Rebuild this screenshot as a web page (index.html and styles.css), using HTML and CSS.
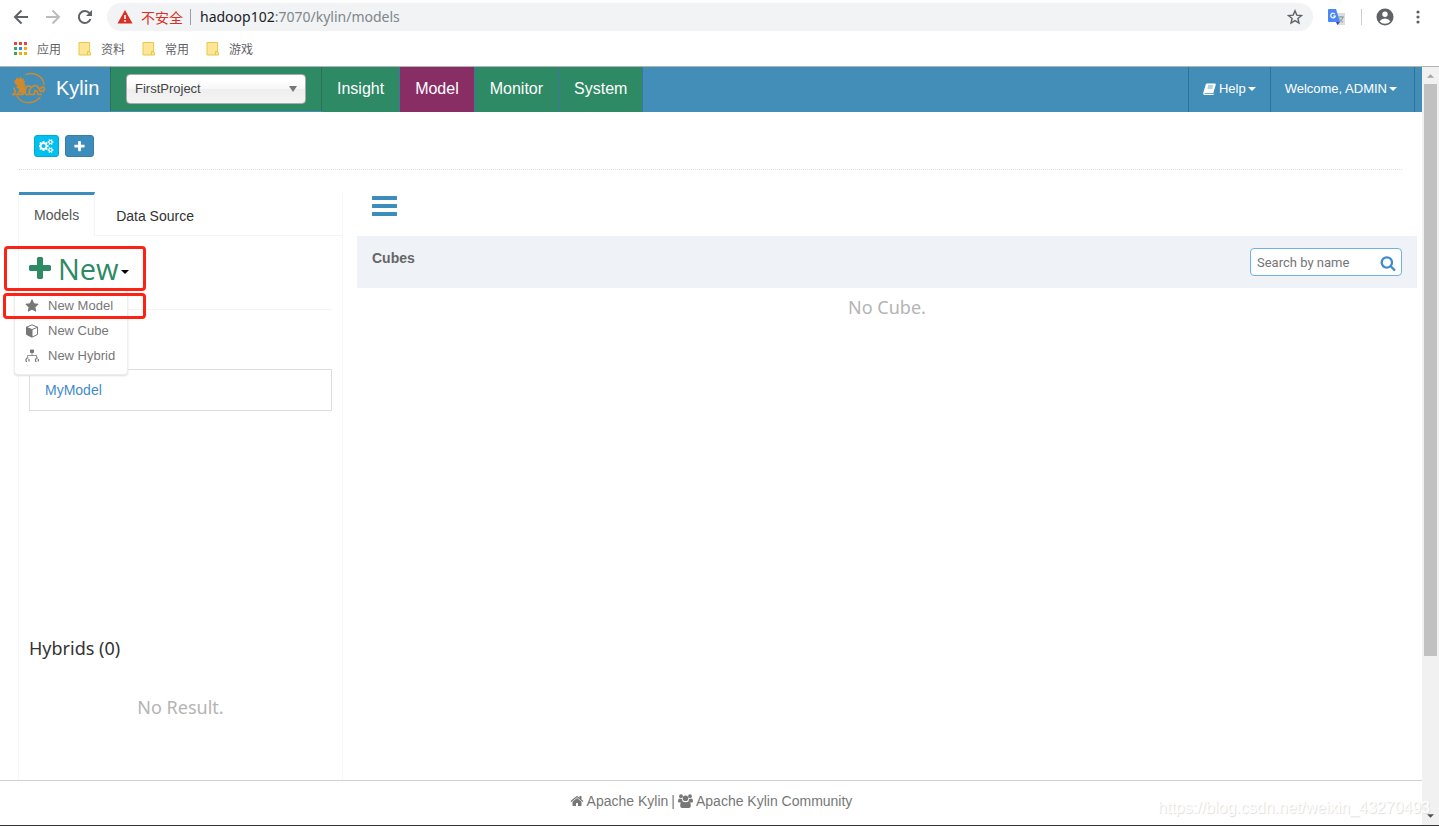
FILE: index.html
```html
<!DOCTYPE html>
<html lang="en">
<head>
<meta charset="utf-8">
<title>Kylin</title>
<link rel="stylesheet" href="styles.css">
</head>
<body>
<svg class="defs" aria-hidden="true">
  <symbol id="plus" viewBox="0 0 1792 1792"><path d="M1600 736v192q0 40-28 68t-68 28h-416v416q0 40-28 68t-68 28h-192q-40 0-68-28t-28-68v-416h-416q-40 0-68-28t-28-68v-192q0-40 28-68t68-28h416v-416q0-40 28-68t68-28h192q40 0 68 28t28 68v416h416q40 0 68 28t28 68z"/></symbol>
  <symbol id="folder" viewBox="0 0 14 16"><path d="M1 1.500h10.500v10h1v2.500h-11.500z" fill="#ffe694" stroke="#e8c74f"/><path d="M9.500 14v-3.500h2" fill="none" stroke="#e8c74f"/></symbol>
  <symbol id="caret" viewBox="0 0 8 4"><path d="M0 0h8l-4 4z"/></symbol>
</svg>

<header class="browser">
  <div class="toolbar">
    <button class="tool" aria-label="Back"><svg width="16" height="16" viewBox="0 0 16 16" fill="none" stroke="#5f6368" stroke-width="2"><path d="M15 8H2M8.500 1.500L2 8l6.500 6.500"/></svg></button>
    <button class="tool" aria-label="Forward"><svg width="16" height="16" viewBox="0 0 16 16" fill="none" stroke="#babcbe" stroke-width="2"><path d="M1 8h13M7.500 1.500L14 8l-6.500 6.500"/></svg></button>
    <button class="tool" aria-label="Reload"><svg width="16" height="16" viewBox="0 0 16 16"><path d="M13.500 10A6 6 0 1 1 12.500 4.200" fill="none" stroke="#5f6368" stroke-width="2"/><path d="M15 1v6H9z" fill="#5f6368"/></svg></button>
    <div class="address">
      <svg width="16" height="14" viewBox="0 0 16 14"><path d="M8 0l7.500 13.500H.5z" fill="#d93025"/><path d="M7.200 5h1.600v4H7.200zM7.200 10h1.600v1.700H7.200z" fill="#fff"/></svg>
      <span class="unsafe">不安全</span>
      <span class="address-rule"></span>
      <span class="url"><b>hadoop102</b>:7070/kylin/models</span>
      <button class="tool" aria-label="Bookmark"><svg width="16" height="16" viewBox="0 0 16 16"><path d="M8 1.800l1.800 4.300 4.700.4-3.600 3 1.100 4.600-4-2.500-4 2.500 1.100-4.600-3.600-3 4.700-.4z" fill="none" stroke="#5f6368" stroke-width="1.400"/></svg></button>
    </div>
    <button class="tool" aria-label="Translate"><svg width="17" height="17" viewBox="0 0 17 17"><path d="M6 4h11v12H9z" fill="#dcdcdc"/><path d="M10 8h6M13 7v1M15 8c-1 3-2.500 4-4 5M11.500 9.500c1 2 2 3 3.500 3.500" stroke="#7f9799" fill="none"/><path d="M1 0h7l4 13H1q-1 0-1-1V1q0-1 1-1z" fill="#4a89f3"/><path d="M8 13h4l-2.500 3z" fill="#3749ab"/><path d="M7 5.300A2.300 2.300 0 1 0 7.300 7H5.200" stroke="#fff" stroke-width="1.200" fill="none"/></svg></button>
    <span class="tool-rule"></span>
    <button class="tool" aria-label="Profile"><svg width="18" height="18" viewBox="0 0 18 18"><circle cx="9" cy="9" r="8.500" fill="#5f6368"/><circle cx="9" cy="6.300" r="2.700" fill="#fff"/><path d="M3.600 13.200Q5.500 10.600 9 10.600t5.400 2.600Q12.300 15.800 9 15.800t-5.400-2.600z" fill="#fff"/></svg></button>
    <button class="tool" aria-label="Browser menu"><svg width="16" height="16" viewBox="0 0 16 16" fill="#5f6368"><circle cx="8" cy="3" r="1.600"/><circle cx="8" cy="8" r="1.600"/><circle cx="8" cy="13" r="1.600"/></svg></button>
  </div>
  <nav class="bookmarks" aria-label="Bookmarks">
    <a href="#"><svg width="14" height="14" viewBox="0 0 14 14"><path d="M0 0h3v3H0zM5 0h3v3H5zM10 0h3v3h-3z" fill="#ea4335"/><path d="M0 5h3v3H0zM0 10h3v3H0z" fill="#34a853"/><path d="M5 5h3v3H5z" fill="#2d86f0"/><path d="M10 5h3v3h-3zM5 10h3v3H5zM10 10h3v3h-3z" fill="#f9ab00"/></svg>应用</a>
    <a href="#"><svg width="14" height="16"><use href="#folder"/></svg>资料</a>
    <a href="#"><svg width="14" height="16"><use href="#folder"/></svg>常用</a>
    <a href="#"><svg width="14" height="16"><use href="#folder"/></svg>游戏</a>
  </nav>
</header>

<div class="window">
  <div class="page">
    <header class="navbar">
      <a class="brand" href="#">
        <svg width="36" height="34" viewBox="0 0 36 34" fill="none" stroke="#d18a2b" stroke-linecap="round">
          <path d="M14 3.500C22 .5 31 5 32 13.500M5 25c4 8 16 9 23 1.500" stroke-width="1.300"/>
          <path d="M2 10l2-1.500L5 6l1.500 2L9 5.500 9.500 8l2.500-.5-.5 2 2 .8-1.500 2 1.500 2-1 1.700 2 2.500-1 3.200-2.500 1.500-3-1.500-1.500-4-2.500-1.500 1.500-1.500L3 12.500z" fill="#d18a2b" stroke="none"/>
          <path d="M2 17l1.500 4L1 23.500h4M7 20l-1 3.500h5l1.500-3.500M12.500 20.500l1.500 3h3" stroke-width="1.600"/>
          <path d="M14 17c0-3 4-2 5-1s3-3 6-1 1.500 5 4 5.500 4.500-2.500 3-4-4 0-2.500 1.500" stroke-width="1.700"/>
          <path d="M19 16.500l-2 4 1 3h4l1-4 2 1 1 3h3" stroke-width="1.600"/>
        </svg>
        Kylin
      </a>
      <div class="project">
        <select aria-label="Project"><option>FirstProject</option></select>
      </div>
      <nav class="menu" aria-label="Main">
        <a href="#">Insight</a><a class="current" href="#">Model</a><a href="#">Monitor</a><a href="#">System</a>
      </nav>
      <nav class="account" aria-label="Account">
        <a href="#"><svg width="13" height="12" viewBox="0 0 13 12"><path d="M4 .5h8q1 0 .8 1L10.500 9.500q-.3.800-1 .8H2q-1 0-.6.800h8.500q.8 0 1-.8l.5-1-.6 2q-.3.700-1 .7H1.500Q-.3 11.500.3 9.500L2.800 1.500Q3 .5 4 .5z" fill="#fff"/><path d="M5 3h5M4.500 5h5" stroke="#438eb9" stroke-width=".8"/></svg>Help<svg class="caret" width="8" height="4"><use href="#caret"/></svg></a>
        <a href="#">Welcome, ADMIN<svg class="caret" width="8" height="4"><use href="#caret"/></svg></a>
      </nav>
    </header>

    <div class="actions">
      <button class="info" aria-label="Manage project"><svg width="15" height="14" viewBox="0 0 1920 1792" fill="currentColor"><path d="M832 896q0-106-75-181t-181-75-181 75-75 181 75 181 181 75 181-75 75-181zm768 512q0-52-38-90t-90-38-90 38-38 90q0 53 37.500 90.500t90.500 37.500 90.500-37.500 37.500-90.500zm0-1024q0-52-38-90t-90-38-90 38-38 90q0 53 37.500 90.500t90.500 37.500 90.500-37.500 37.500-90.500zm-384 421v185q0 10-7 19.500t-16 10.500l-155 24q-11 35-32 76 34 48 90 115 7 11 7 20 0 12-7 19-23 30-82.500 89.500t-78.500 59.500q-11 0-21-7l-115-90q-37 19-77 31-11 108-23 155-7 24-30 24h-186q-11 0-20-7.500t-10-17.500l-23-153q-34-10-75-31l-118 89q-7 7-20 7-11 0-21-8-144-133-144-160 0-9 7-19 10-14 41-53t47-61q-23-44-35-82l-152-24q-10-1-17-9.500t-7-19.500v-185q0-10 7-19.500t16-10.500l155-24q11-35 32-76-34-48-90-115-7-11-7-20 0-12 7-20 22-30 82-89t79-59q11 0 21 7l115 90q34-18 77-32 11-108 23-154 7-24 30-24h186q11 0 20 7.500t10 17.500l23 153q34 10 75 31l118-89q8-7 20-7 11 0 21 8 144 133 144 160 0 8-7 19-12 16-42 54t-45 60q23 48 34 82l152 23q10 2 17 10.500t7 19.500zm640 533v140q0 16-149 31-12 27-30 52 51 113 51 138 0 4-4 7-122 71-124 71-8 0-46-47t-52-68q-20 2-30 2t-30-2q-14 21-52 68t-46 47q-2 0-124-71-4-3-4-7 0-25 51-138-18-25-30-52-149-15-149-31v-140q0-16 149-31 13-29 30-52-51-113-51-138 0-4 4-7 4-2 35-20t59-34 30-16q8 0 46 46.500t52 67.500q20-2 30-2t30 2q51-71 92-112l6-2q4 0 124 70 4 3 4 7 0 25-51 138 17 23 30 52 149 15 149 31zm0-1024v140q0 16-149 31-12 27-30 52 51 113 51 138 0 4-4 7-122 71-124 71-8 0-46-47t-52-68q-20 2-30 2t-30-2q-14 21-52 68t-46 47q-2 0-124-71-4-3-4-7 0-25 51-138-18-25-30-52-149-15-149-31v-140q0-16 149-31 13-29 30-52-51-113-51-138 0-4 4-7 4-2 35-20t59-34 30-16q8 0 46 46.500t52 67.500q20-2 30-2t30 2q51-71 92-112l6-2q4 0 124 70 4 3 4 7 0 25-51 138 17 23 30 52 149 15 149 31z"/></svg></button>
      <button class="primary" aria-label="Add project"><svg width="13" height="13" fill="currentColor"><use href="#plus"/></svg></button>
    </div>

    <main class="columns">
      <section class="side">
        <div class="tabs"><a class="tab active" href="#">Models</a><a class="tab" href="#">Data Source</a></div>
        <div class="side-body">
          <div class="new">
            <button class="new-button"><svg width="28" height="28" fill="currentColor"><use href="#plus"/></svg>New<svg class="new-caret" width="8" height="4"><use href="#caret"/></svg></button>
            <ul class="dropdown">
              <li><a href="#"><svg width="14" height="14" viewBox="0 0 1792 1792" fill="currentColor"><path d="M1728 647q0 22-26 48l-363 354 86 500q1 7 1 20 0 21-10.500 35.500t-30.500 14.500q-19 0-40-12l-449-236-449 236q-22 12-40 12-21 0-31.500-14.500t-10.500-35.500q0-6 2-20l86-500-364-354q-25-27-25-48 0-37 56-46l502-73 225-455q19-41 49-41t49 41l225 455 502 73q56 9 56 46z"/></svg>New Model</a></li>
              <li><a href="#"><svg width="14" height="14" viewBox="0 0 14 14"><path d="M7 .8l5.500 2.300v7.300L7 13.200l-5.500-2.800V3.100z" fill="#fff" stroke="#777"/><path d="M1.500 3.300L7 5.700v7.500l-5.500-2.800z" fill="#777"/><path d="M1.500 3.200L7 5.600l5.500-2.400M7 5.600v7.400" fill="none" stroke="#777"/></svg>New Cube</a></li>
              <li><a href="#"><svg width="14" height="14" viewBox="0 0 14 14" fill="none" stroke="#777"><path d="M5.500 1h3v2.500h-3z" fill="#777"/><path d="M7 4v2.500M2.500 8.500v-2h9v2" stroke-width=".8"/><path d="M1 12.500v-2l1-1.500h1.500M10.500 12.500v-2l1-1.500H13" stroke-width="1.200"/><path d="M1 12.500h1M4 10v2.500M10.500 12.500h1M13.300 10v2.500" stroke-width="1.200"/></svg>New Hybrid</a></li>
            </ul>
            <span class="mark mark-button"></span>
            <span class="mark mark-item"></span>
          </div>
          <div class="models"><a class="model" href="#">MyModel</a></div>
          <h2>Hybrids (0)</h2>
          <p class="empty">No Result.</p>
        </div>
      </section>
      <section class="content">
        <button class="toggle" aria-label="Toggle sidebar"><svg width="25" height="20" viewBox="0 0 25 20" fill="#3c8dbc"><rect width="25" height="4" rx=".5"/><rect y="8" width="25" height="4" rx=".5"/><rect y="16" width="25" height="4" rx=".5"/></svg></button>
        <div class="cubes">
          <h3>Cubes</h3>
          <label class="search">
            <input type="text" aria-label="Search by name" placeholder="Search by name">
            <svg width="16" height="16" viewBox="0 0 1792 1792" fill="#428bca"><path d="M1216 832q0-185-131.500-316.500t-316.500-131.500-316.500 131.500-131.500 316.500 131.500 316.500 316.500 131.500 316.500-131.500 131.500-316.500zm512 832q0 52-38 90t-90 38q-54 0-90-38l-343-342q-179 124-399 124-143 0-273.500-55.500t-225-150-150-225-55.500-273.500 55.500-273.500 150-225 225-150 273.500-55.500 273.500 55.500 225 150 150 225 55.500 273.500q0 220-124 399l343 343q37 37 37 90z"/></svg>
          </label>
        </div>
        <p class="empty">No Cube.</p>
      </section>
    </main>

    <footer class="footer">
      <svg width="14" height="14" viewBox="0 0 1792 1792" fill="currentColor"><path d="M1472 992v480q0 26-19 45t-45 19h-384v-384h-256v384h-384q-26 0-45-19t-19-45v-480q0-1 .5-3t.5-3l575-474 575 474q1 2 1 6zm223-69l-62 74q-8 9-21 11h-3q-13 0-21-7l-692-577-692 577q-12 8-24 7-13-2-21-11l-62-74q-8-10-7-23.500t11-21.500l719-599q32-26 76-26t76 26l244 204v-195q0-14 9-23t23-9h192q14 0 23 9t9 23v408l219 182q10 8 11 21.500t-7 23.500z"/></svg>
      <a href="#">Apache Kylin</a> |
      <svg width="15" height="14" viewBox="0 0 15 14" fill="currentColor"><circle cx="3" cy="2.200" r="1.900"/><circle cx="12" cy="2.200" r="1.900"/><circle cx="7.500" cy="4.200" r="2.800"/><path d="M0 7.500Q0 4.600 1.500 4.600L4 5Q4 6.500 5 7.500 3.500 7.500 3 8.500H1Q0 8.500 0 7.500zM15 7.500Q15 4.600 13.500 4.600L11 5Q11 6.500 10 7.500q1.500 0 2 1h2q1 0 1-1zM2.200 12Q2.200 7.600 4.500 7.600q3 1.200 6 0 2.300 0 2.300 4.400 0 2-2 2H4.200q-2 0-2-2z"/></svg>
      <a href="#">Apache Kylin Community</a>
    </footer>
  </div>
  <div class="scrollbar" aria-hidden="true">
    <svg width="7" height="4" viewBox="0 0 8 4" fill="#a3a3a3"><path d="M0 4h8L4 0z"/></svg>
    <span class="thumb"></span>
    <svg width="7" height="4" viewBox="0 0 8 4" fill="#505050"><path d="M0 0h8L4 4z"/></svg>
  </div>
  <span class="watermark">https://blog.csdn.net/weixin_43270493</span>
</div>
</body>
</html>
```
FILE: styles.css
```css
* { box-sizing: border-box; }
body {
  margin: 0;
  min-height: 100vh;
  display: flex;
  flex-direction: column;
  background: #fff;
  color: #333;
  font: 14px/20px "Liberation Sans", Arial, sans-serif;
}
a { color: inherit; text-decoration: none; }
button { border: 0; padding: 0; background: none; font: inherit; color: inherit; cursor: pointer; }
h2, h3, p, ul { margin: 0; padding: 0; list-style: none; }
svg { flex: none; }
.defs { display: none; }

/* Browser bars */
.browser { border-bottom: 1px solid #b3b3b3; }
.toolbar { display: flex; align-items: center; height: 34px; padding: 0 13px; }
.tool { display: flex; margin-right: 16px; }
.tool:last-child { margin-right: 0; }
.address {
  flex: 1;
  display: flex;
  align-items: center;
  height: 28px;
  margin: 0 15px 0 -2px;
  padding: 0 10px;
  border-radius: 14px;
  background: #f1f3f4;
}
.address .tool { margin: 0 0 0 auto; }
.unsafe { margin-left: 8px; color: #d93025; font: 14px/20px "Noto Sans CJK SC", sans-serif; }
.address-rule { width: 1px; height: 16px; margin: 0 9px 0 7px; background: #9aa0a6; }
.url { color: #80868b; font: 14px/20px "Noto Sans", sans-serif; }
.url b { color: #202124; font-weight: 400; }
.tool-rule { width: 1px; height: 16px; margin-right: 14px; background: #ccc; }
.bookmarks { display: flex; gap: 17px; height: 32px; padding: 0 14px 2px; align-items: center; }
.bookmarks a {
  display: flex;
  align-items: center;
  gap: 9px;
  color: #5f6368;
  font: 12px/20px "Noto Sans CJK SC", sans-serif;
}

/* Page frame */
.window { position: relative; flex: 1; display: flex; border-bottom: 1px solid #333; }
.page { flex: 1; display: flex; flex-direction: column; min-width: 0; }
.scrollbar {
  width: 17px;
  display: flex;
  flex-direction: column;
  align-items: center;
  padding: 7px 0;
  background: #f1f1f1;
}
.thumb { width: 13px; height: 572px; margin: 6px 0 auto; background: #c1c1c1; }
.watermark {
  position: absolute;
  right: 9px;
  bottom: 7px;
  color: #fff;
  font-size: 16px;
  text-shadow: 1px 1px 1px #ddd;
}

/* Top navigation */
.navbar { display: flex; height: 45px; padding-right: 7px; background: #438eb9; color: #fff; }
.brand {
  display: flex;
  align-items: center;
  gap: 8px;
  width: 110px;
  padding: 0 0 3px 12px;
  font-size: 20px;
}
.project {
  position: relative;
  width: 212px;
  height: 44px;
  padding: 7px 15px;
  border: solid #2b7254;
  border-width: 0 1px;
  background: #2e8965;
}
.project select {
  appearance: none;
  width: 180px;
  height: 30px;
  padding: 0 8px;
  border: 1px solid #aaa;
  border-radius: 4px;
  background: linear-gradient(#fff 20%, #f6f6f6 50%, #eee 52%, #f4f4f4);
  color: #444;
  font: 13px/20px "Liberation Sans", Arial, sans-serif;
}
.project::after {
  content: "";
  position: absolute;
  top: 19px;
  right: 24px;
  border: solid transparent;
  border-width: 6px 4px 0;
  border-top-color: #777;
  pointer-events: none;
}
.menu { display: flex; font-size: 16px; line-height: 43px; }
.menu a { padding: 0 15px; border-right: 1px solid #3f73a0; background: #2e8965; }
.menu .current { background: #892e65; }
.account { display: flex; margin-left: auto; font-size: 13px; border-right: 1px solid #2c7396; }
.account a { display: flex; align-items: center; padding: 0 14px 1px; border-left: 1px solid #2c7396; }
.account svg:first-child { margin-right: 3px; }
.account .caret { margin-left: 2px; fill: #fff; }

/* Project actions */
.actions {
  display: flex;
  gap: 6px;
  margin: 0 20px 22px 19px;
  padding: 23px 15px 12px;
  border-bottom: 1px dotted #ddd;
}
.actions button {
  display: flex;
  align-items: center;
  justify-content: center;
  height: 22px;
  border: 1px solid;
  border-radius: 3px;
  color: #fff;
}
.actions .info { width: 25px; background: #00c0ef; border-color: #00acd6; }
.actions .primary { width: 29px; background: #3c8dbc; border-color: #367fa9; }

/* Columns */
.columns { flex: 1; display: flex; gap: 14px; padding: 0 5px 0 18px; }
.side { flex: 0 0 325px; border: solid #f7f7f7; border-width: 0 1px; }
.tabs { display: flex; height: 44px; border-bottom: 1px solid #f4f4f4; }
.tab { padding: 14px 15px 0 21px; }
.tab.active {
  height: 44px;
  padding: 10px 15px;
  border-top: 3px solid #3c8dbc;
  border-right: 1px solid #f4f4f4;
  background: #fff;
  color: #555;
}
.side-body { padding: 0 10px; }
.new { position: relative; height: 74px; padding-top: 13px; border-bottom: 1px solid #f4f4f4; }
.new-button {
  display: flex;
  align-items: center;
  gap: 4px;
  margin-left: -3px;
  color: #2e8965;
  font: 29px/40px "Open Sans", "Noto Sans", sans-serif;
}
.new-caret { margin: 6px 0 0 -2px; fill: #000; }
.dropdown {
  position: absolute;
  top: 54px;
  left: -15px;
  width: 114px;
  padding: 2px 0 6px;
  border: 1px solid #eee;
  border-radius: 4px;
  background: #fff;
  color: #777;
  box-shadow: 0 1px 2px #ddd;
  font-size: 13px;
}
.dropdown a { display: flex; align-items: center; gap: 9px; height: 25px; padding-left: 10px; }
.mark { position: absolute; border: 3px solid #fd2314; border-radius: 4px; pointer-events: none; }
.mark-button { top: 10px; left: -25px; width: 142px; height: 45px; }
.mark-item { top: 57px; left: -26px; width: 143px; height: 26px; }
.models { min-height: 323px; padding-top: 59px; }
.model { display: block; padding: 10px 15px; border: 1px solid #ddd; color: #428bca; }
h2 { color: #333; font: 18px/30px "Noto Sans", sans-serif; }
.empty { color: #b4b4b4; text-align: center; font: 18px/24px "Noto Sans", sans-serif; }
.side .empty { padding: 32px 0; }
.content { flex: 1; }
.toggle { display: flex; padding: 4px 15px 20px; }
.cubes {
  display: flex;
  justify-content: space-between;
  padding: 12px 15px;
  background: #eff2f7;
}
h3 { color: #666; font: bold 14px/20px "Liberation Sans", Arial, sans-serif; }
.search {
  display: flex;
  align-items: center;
  width: 152px;
  height: 28px;
  padding: 2px 5px 0 6px;
  border: 1px solid #6fb3e0;
  border-radius: 4px;
  background: #fff;
}
.search input {
  flex: 1;
  min-width: 0;
  padding: 0;
  border: 0;
  outline: 0;
  background: none;
  font: 13px/20px Roboto, sans-serif;
}
.search input::placeholder { color: #757575; }
.content .empty { padding-top: 7px; }

.footer {
  display: flex;
  align-items: center;
  justify-content: center;
  gap: 3px;
  height: 45px;
  padding-bottom: 4px;
  border-top: 1px solid #d2d2d2;
  color: #777;
}
```
